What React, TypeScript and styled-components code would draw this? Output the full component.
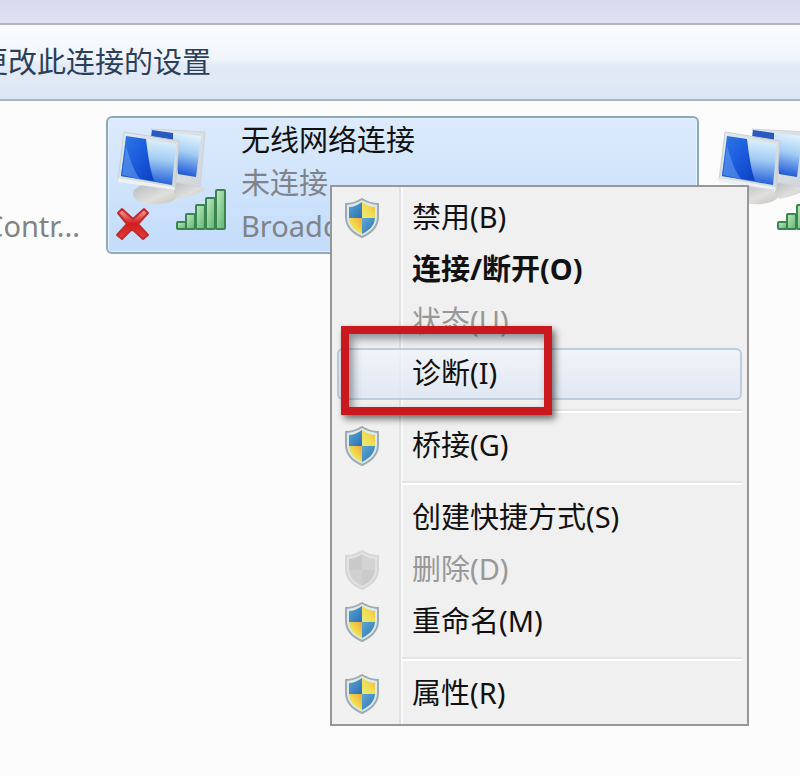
import React, { useId } from "react";
import styled, { createGlobalStyle, css } from "styled-components";

const GlobalStyle = createGlobalStyle`
  * { box-sizing: border-box; }
  body {
    margin: 0;
    background: #fcfcfc;
    font-family: "Noto Sans", "Noto Sans CJK SC", sans-serif;
    font-size: 29px;
    line-height: 43px;
    color: #111;
  }
  button { font: inherit; color: inherit; border: 0; background: none; padding: 0; }
`;

const Page = styled.div`
  position: relative;
  min-height: 100vh;
  overflow: hidden;
`;

const TitleStrip = styled.div`
  height: 25px;
  background: linear-gradient(#d6daed, #dfe2f1);
  border-bottom: 2px solid #b0b7c3;
`;

const Toolbar = styled.header`
  display: flex;
  align-items: center;
  height: 76px;
  overflow: hidden;
  background: linear-gradient(#fafcff 0%, #f1f5fc 46%, #e3eaf6 54%, #dce7f5 100%);
  border-bottom: 2px solid #a9b5c3;
`;

const ToolbarButton = styled.button`
  display: flex;
  justify-content: flex-end;
  width: 211px;
  height: 44px;
  color: #2c3f5a;
  white-space: nowrap;
`;

const Connections = styled.main`
  display: grid;
  grid-template-columns: 106px minmax(0, 1fr) 101px;
  padding-top: 15px;
`;

const Tile = styled.button<{ $selected?: boolean }>`
  display: flex;
  gap: 12px;
  height: 138px;
  padding: 0 0 0 5px;
  overflow: hidden;
  text-align: left;
  border: 2px solid transparent;
  border-radius: 6px;
  ${(p) =>
    p.$selected &&
    css`
      border-color: #8fa9bd;
      background: linear-gradient(#dcebfc, #c3dcfb);
      box-shadow: inset 0 0 0 1px #e6f2fd;
    `}
`;

const ClippedTile = styled(Tile)`
  justify-content: flex-end;
  align-items: flex-end;
  padding: 0 26px 5px 0;
  border-width: 2px 0;
  border-radius: 0;
`;

const TileText = styled.span`
  display: flex;
  flex-direction: column;
  white-space: nowrap;
`;

const Muted = styled.span`
  color: #808488;
`;

const TileIcon = styled.svg`
  flex: none;
  width: 116px;
  height: 120px;
  margin-top: 6px;
`;

const LastTile = styled(Tile)`
  padding-left: 13px;
  border-right-width: 0;
`;

const Menu = styled.div`
  position: absolute;
  top: 185px;
  left: 330px;
  width: 419px;
  padding: 5px 5px 4px;
  background: linear-gradient(90deg, #f1f1f1 67px, #e2e2e2 67px 69px, #fafafa 69px 71px, #f0f0f0 71px);
  border: 2px solid #979797;
`;

const MenuItem = styled.button<{ $bold?: boolean; $hot?: boolean }>`
  position: relative;
  display: grid;
  grid-template-columns: 75px 1fr;
  align-items: center;
  width: 100%;
  height: 52px;
  text-align: left;
  white-space: nowrap;
  font-weight: ${(p) => (p.$bold ? 700 : 400)};
  border-radius: 6px;
  &:disabled { color: #989898; }
  ${(p) =>
    p.$hot &&
    css`
      background: linear-gradient(rgba(242, 245, 250, 0.8), rgba(220, 230, 244, 0.8));
      box-shadow: inset 0 0 0 2px #bccddd;
    `}
`;

const ItemLabel = styled.span`
  grid-column: 2;
  padding-bottom: 4px;
`;

const Separator = styled.hr`
  height: 4px;
  margin: 9px 0 7px 65px;
  border: 0;
  border-top: 2px solid #e4e4e4;
  border-bottom: 2px solid #fff;
`;

const ShieldSvg = styled.svg`
  width: 36px;
  height: 40px;
  margin-left: 7px;
`;

const Marker = styled.span`
  position: absolute;
  top: -22px;
  left: 4px;
  z-index: 1;
  width: 211px;
  height: 89px;
  border: 8px solid #c9191e;
  box-shadow: 3px 4px 7px rgba(0, 0, 0, 0.55), inset 4px 5px 8px rgba(40, 50, 60, 0.5);
  pointer-events: none;
`;

function Shield({ gray }: { gray?: boolean }) {
  const id = useId();
  const outline = "M18 1 C23 4 29 6 34 6 V19 C34 29 27 35 18 39 C9 35 2 29 2 19 V6 C8 6 13 4 18 1 Z";
  const inner = "M18 4 C22 7 27 9 31 9 V19 C31 27 26 32 18 36 C10 32 5 27 5 19 V9 C9 9 14 7 18 4 Z";
  return (
    <ShieldSvg viewBox="0 0 36 40" aria-hidden="true">
      <defs>
        <clipPath id={id}><path d={inner} /></clipPath>
        <linearGradient id={id + "b"} x2="1" y2="1">
          <stop stopColor="#5fa9d3" /><stop offset="1" stopColor="#2b6fb5" />
        </linearGradient>
        <linearGradient id={id + "y"} x1="1" x2="0" y2="1">
          <stop stopColor="#f2a73a" /><stop offset=".5" stopColor="#f1dc4e" /><stop offset="1" stopColor="#e6e884" />
        </linearGradient>
      </defs>
      <path d={outline} fill={gray ? "#e2e2e2" : "#dfe9ea"} stroke={gray ? "#d6d6d6" : "#9dabb2"} strokeWidth="2" />
      <g clipPath={`url(#${id})`}>
        <path d="M4 3H18V20H4Z" fill={gray ? "#c9c9c9" : `url(#${id}b)`} />
        <path d="M18 3H32V20H18Z" fill={gray ? "#d3d3d3" : `url(#${id}y)`} />
        <path d="M4 20H18V37H4Z" fill={gray ? "#d1d1d1" : `url(#${id}y)`} />
        <path d="M18 20H32V37H18Z" fill={gray ? "#cbcbcb" : `url(#${id}b)`} />
      </g>
    </ShieldSvg>
  );
}

function NetworkIcon({ disconnected }: { disconnected?: boolean }) {
  const id = useId();
  const bars = [
    [176, 222], [185, 214], [195, 205], [205, 198], [215, 190],
  ];
  return (
    <TileIcon viewBox="112 124 116 120" aria-hidden="true">
      <defs>
        <linearGradient id={id + "s"} x2="1" y2="1">
          <stop stopColor="#2f79e2" /><stop offset=".45" stopColor="#1d5fe0" /><stop offset="1" stopColor="#0b3fc0" />
        </linearGradient>
        <linearGradient id={id + "g"} x1=".6" x2=".45" y2="1">
          <stop stopColor="#e6f5fd" /><stop offset=".45" stopColor="#a3cdf4" /><stop offset="1" stopColor="#1552d6" />
        </linearGradient>
        <linearGradient id={id + "f"} x2="1" y2="1">
          <stop stopColor="#e2e9ef" /><stop offset="1" stopColor="#d0d5d9" />
        </linearGradient>
        <linearGradient id={id + "t"} x2="1" y2="1">
          <stop stopColor="#b4b9bd" /><stop offset=".6" stopColor="#e0dfdd" /><stop offset="1" stopColor="#c8c5c0" />
        </linearGradient>
        <linearGradient id={id + "x"} x2="0" y2="1">
          <stop stopColor="#f4a7a4" /><stop offset=".5" stopColor="#d4191b" /><stop offset="1" stopColor="#e2423c" />
        </linearGradient>
        <linearGradient id={id + "r"} x2="1" y2="1">
          <stop stopColor="#c2ebc4" /><stop offset="1" stopColor="#5cb36c" />
        </linearGradient>
      </defs>
      <path d="M176 181 L204 188 C205 191 190 196 178 199 L172 194Z" fill={`url(#${id}t)`} />
      <path d="M150 129 L204 132 L199 187 L174 182Z" fill={`url(#${id}f)`} stroke="#cdd3d8" />
      <path d="M151 130 L172 133 L172 142 L150 137Z" fill="#285ac0" />
      <path d="M173 133 L200 136 L195 177 L177 174Z" fill={`url(#${id}g)`} />
      <path d="M143 184 L137 187 C129 191 130 200 143 203 C157 206 173 203 176 197 L170 188Z" fill={`url(#${id}t)`} />
      <path d="M123 132 L178 141 L174 190 L117 180Z" fill={`url(#${id}f)`} stroke="#c6cfd6" />
      <path d="M117 178 L173 187 L174 190 L117 182Z" fill="#edf1f4" />
      <path d="M125 136 L175 144 L171 185 L120 176Z" fill={`url(#${id}g)`} />
      <path d="M125 136 L145 139 C147 156 149 169 153 181 L120 176Z" fill={`url(#${id}s)`} />
      <path d="M125 146 C129 158 131 168 139 179 L121 175Z" fill="#6aa1ed" opacity=".55" />
      {bars.map(([x, y]) => (
        <rect key={x} x={x} y={y} width="9" height={229 - y} rx="1" fill={`url(#${id}r)`} stroke="#3a8450" strokeWidth="2" />
      ))}
      {disconnected && (
        <path
          d="M121 209 L132 219 L143 209 L147 213 L137 224 L147 235 L142 239 L131 229 L121 239 L116 235 L126 224 L117 213Z"
          fill={`url(#${id}x)`} stroke="#c22a2c" strokeWidth="2" strokeLinejoin="round"
        />
      )}
    </TileIcon>
  );
}

type Entry = {
  label: string;
  shield?: boolean;
  bold?: boolean;
  disabled?: boolean;
  hot?: boolean;
};

const groups: Entry[][] = [
  [
    { label: "禁用(B)", shield: true },
    { label: "连接/断开(O)", bold: true },
    { label: "状态(U)", disabled: true },
    { label: "诊断(I)", hot: true },
  ],
  [{ label: "桥接(G)", shield: true }],
  [
    { label: "创建快捷方式(S)" },
    { label: "删除(D)", shield: true, disabled: true },
    { label: "重命名(M)", shield: true },
  ],
  [{ label: "属性(R)", shield: true }],
];

export default function App() {
  return (
    <Page lang="zh-CN">
      <GlobalStyle />
      <TitleStrip />
      <Toolbar>
        <ToolbarButton type="button">更改此连接的设置</ToolbarButton>
      </Toolbar>
      <Connections>
        <ClippedTile type="button">
          <Muted>Contr...</Muted>
        </ClippedTile>
        <Tile type="button" $selected>
          <NetworkIcon disconnected />
          <TileText>
            <span>无线网络连接</span>
            <Muted>未连接</Muted>
            <Muted>Broadcom</Muted>
          </TileText>
        </Tile>
        <LastTile type="button" aria-label="网络连接">
          <NetworkIcon />
        </LastTile>
      </Connections>
      <Menu role="menu">
        {groups.map((group, g) => (
          <React.Fragment key={g}>
            {g > 0 && <Separator />}
            {group.map((item) => (
              <MenuItem
                key={item.label}
                type="button"
                role="menuitem"
                disabled={item.disabled}
                $bold={item.bold}
                $hot={item.hot}
              >
                {item.shield && <Shield gray={item.disabled} />}
                <ItemLabel>{item.label}</ItemLabel>
                {item.hot && <Marker />}
              </MenuItem>
            ))}
          </React.Fragment>
        ))}
      </Menu>
    </Page>
  );
}
